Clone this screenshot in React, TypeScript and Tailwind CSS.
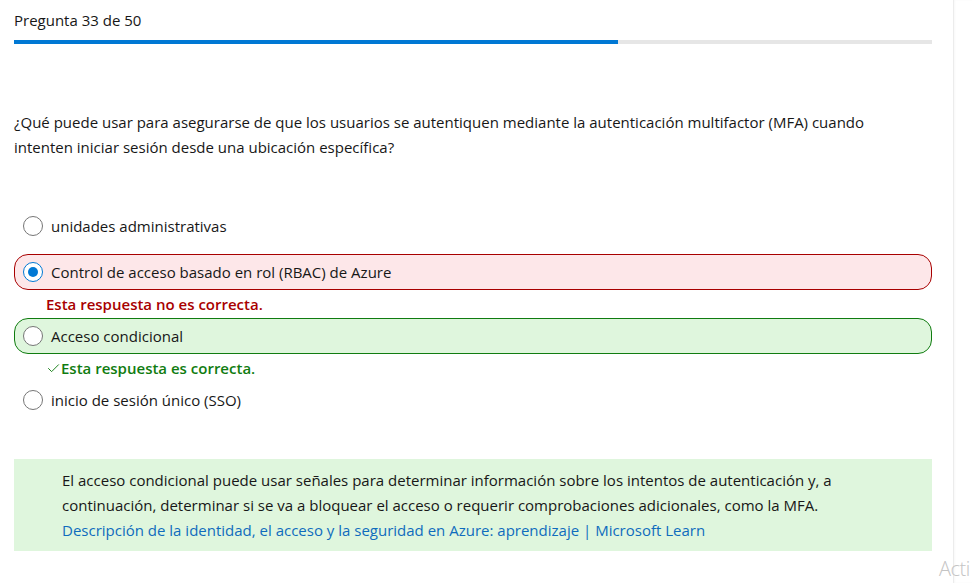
import { Check } from "lucide-react";

const options = [
  { id: "a", label: "unidades administrativas", state: "none", checked: false },
  { id: "b", label: "Control de acceso basado en rol (RBAC) de Azure", state: "wrong", checked: true },
  { id: "c", label: "Acceso condicional", state: "right", checked: false },
  { id: "d", label: "inicio de sesión único (SSO)", state: "none", checked: false },
];

export default function App() {
  return (
    <div
      className="relative flex h-[583px] w-[972px] overflow-hidden bg-white text-[15px] text-[#171717]"
      style={{ fontFamily: '"Open Sans", "Noto Sans", sans-serif' }}
    >
      <main className="w-[953px] shrink-0 pl-[14px] pr-[21px]">
        <p className="pt-[10px] leading-[20px]">Pregunta 33 de 50</p>
        <div className="mt-[10px] flex h-[4px] bg-[#e6e6e6]">
          <div className="w-[604px] bg-[#0078d4]" />
        </div>

        <p className="mt-[66px] leading-[25px]">
          ¿Qué puede usar para asegurarse de que los usuarios se autentiquen mediante la autenticación multifactor (MFA) cuando
          <br />
          intenten iniciar sesión desde una ubicación específica?
        </p>

        <div className="mt-[48px] flex flex-col">
          {options.map((o) => (
            <Option key={o.id} {...o} />
          ))}
        </div>

        <div className="mt-[41px] h-[92px] bg-[#dff6dd] pl-[48px] pr-4 pt-[9px] leading-[25px]">
          <p>
            El acceso condicional puede usar señales para determinar información sobre los intentos de autenticación y, a
            <br />
            continuación, determinar si se va a bloquear el acceso o requerir comprobaciones adicionales, como la MFA.
          </p>
          <p className="text-[#0f6cbd]">
            Descripción de la identidad, el acceso y la seguridad en Azure: aprendizaje | Microsoft Learn
          </p>
        </div>
      </main>

      <aside className="flex-1 border-l border-[#ececec] shadow-[inset_1px_0_2px_rgba(0,0,0,0.03)]" />

      <span className="absolute bottom-[0px] left-[939px] text-[20px] leading-[28px] font-light tracking-[-0.5px] text-[#c4c4c4]">
        Acti
      </span>
    </div>
  );
}

function Option({ label, state, checked }: { label: string; state: string; checked: boolean }) {
  const box =
    state === "wrong"
      ? "border-[#a80000] bg-[#fde7e9]"
      : state === "right"
        ? "border-[#107c10] bg-[#dff6dd]"
        : "border-transparent";
  const gap = label.startsWith("inicio") || state === "right" ? "mt-[4px]" : state === "wrong" ? "mt-[10px]" : "";
  return (
    <div className={gap}>
      <div className={`flex h-[36px] items-center gap-[8px] rounded-[14px] border px-[8px] ${box}`}>
        <span
          className={`flex h-[20px] w-[20px] items-center justify-center rounded-full border bg-white ${
            checked ? "border-[#0078d4]" : "border-[#767676]"
          }`}
        >
          {checked && <span className="h-[10px] w-[10px] rounded-full bg-[#0078d4]" />}
        </span>
        <span className="leading-[20px]">{label}</span>
      </div>
      {state === "wrong" && (
        <p className="mt-[4px] pl-[32px] font-semibold leading-[20px] text-[#a80000]">Esta respuesta no es correcta.</p>
      )}
      {state === "right" && (
        <p className="mt-[4px] flex items-center pl-[32px] font-semibold leading-[20px] text-[#107c10]">
          <Check className="h-[15px] w-[15px]" strokeWidth={1.5} />
          Esta respuesta es correcta.
        </p>
      )}
    </div>
  );
}
